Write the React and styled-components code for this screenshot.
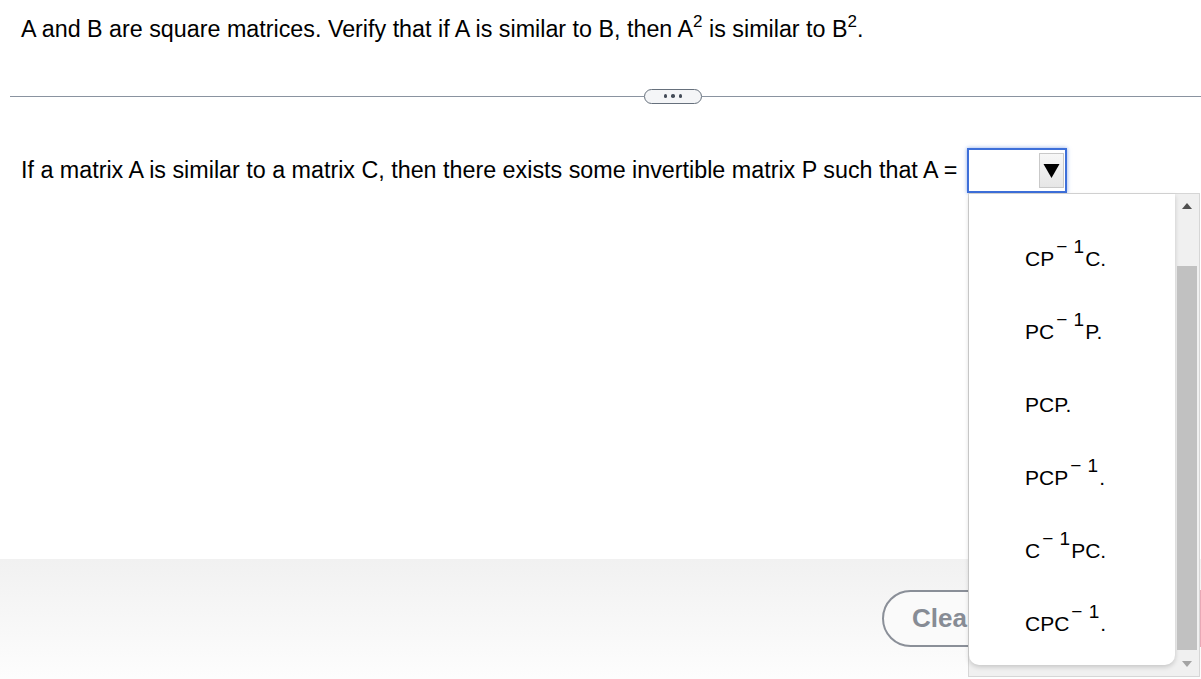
import React from "react";
import styled, { createGlobalStyle } from "styled-components";

const Global = createGlobalStyle`
  *, *::before, *::after {
    box-sizing: border-box;
  }
  html, body {
    margin: 0;
    padding: 0;
    background: #fff;
    overflow: hidden;
  }
  body {
    font-family: "Liberation Sans", Arial, sans-serif;
    color: #000;
  }
`;

const Page = styled.div`
  position: relative;
  width: 1201px;
  height: 679px;
  display: flex;
  flex-direction: column;
  overflow: hidden;
`;

const Prompt = styled.div`
  font-size: 23.3px;
  line-height: 27px;
  padding: 16px 0 0 21px;
  height: 88px;
  white-space: nowrap;
`;

const Sup = styled.sup`
  font-size: 17px;
  line-height: 0;
  position: relative;
  top: -1px;
`;

const Divider = styled.div`
  margin: 0 0 0 10px;
  height: 16px;
  display: flex;
  align-items: center;
  &::before,
  &::after {
    content: "";
    flex: 1;
    height: 1px;
    background: #8a93a0;
  }
  &::before {
    flex: 0 0 634px;
  }
`;

const MoreButton = styled.div`
  width: 58px;
  height: 15px;
  border: 1.5px solid #66707c;
  border-radius: 8px;
  background: #f4f5f7;
  display: flex;
  align-items: center;
  justify-content: center;
  gap: 4px;
  span {
    width: 3.5px;
    height: 3.5px;
    border-radius: 50%;
    background: #444c58;
  }
`;

const Question = styled.div`
  margin-top: 44px;
  padding-left: 21px;
  display: flex;
  align-items: center;
  font-size: 23.3px;
  height: 45px;
  gap: 10px;
  white-space: nowrap;
`;

const SelectBox = styled.div`
  position: relative;
  width: 100px;
  height: 45px;
  border: 2px solid #3d6fd9;
  box-shadow: 0 0 4px rgba(61, 111, 217, 0.6);
  background: #fff;
  display: flex;
  justify-content: flex-end;
  align-items: center;
  padding-right: 1px;
`;

const ArrowButton = styled.div`
  width: 25px;
  height: 35px;
  border: 1px solid #c9c9c9;
  background: linear-gradient(#f7f7f7, #e6e6e6);
  display: flex;
  align-items: center;
  justify-content: center;
`;

const Spacer = styled.div`
  flex: 1;
`;

const Footer = styled.div`
  height: 120px;
  flex-shrink: 0;
  background: linear-gradient(#f1f1f1, #fdfdfd);
  display: flex;
  align-items: flex-start;
  padding: 31px 0 0 882px;
  gap: 24px;
`;

const ClearButton = styled.div`
  height: 57px;
  border: 2.5px solid #8a8f98;
  border-radius: 29px;
  padding: 0 28px;
  display: flex;
  align-items: center;
  font-size: 26px;
  font-weight: bold;
  color: #878c95;
  background: #fafafa;
  white-space: nowrap;
  flex-shrink: 0;
`;

const CheckButton = styled.div`
  height: 57px;
  width: 220px;
  border-radius: 29px;
  background: #e9a8b6;
  flex-shrink: 0;
`;

const ListBox = styled.div`
  position: absolute;
  left: 968px;
  top: 193px;
  width: 232px;
  height: 484px;
  border: 1px solid #d6d6d6;
  background: #f0f0f0;
  display: flex;
`;

const OptionPanel = styled.div`
  flex: 1;
  background: #fff;
  border-radius: 0 0 10px 10px;
  box-shadow: 0 2px 5px rgba(0, 0, 0, 0.18);
  margin-bottom: 11px;
  display: flex;
  flex-direction: column;
  padding-top: 28px;
`;

const Option = styled.div`
  height: 73px;
  padding-left: 56px;
  font-size: 21px;
  display: flex;
  align-items: center;
  white-space: pre;
`;

const OptSup = styled.span`
  font-size: 19px;
  position: relative;
  top: -12px;
  margin-left: 2px;
  margin-right: 1px;
  word-spacing: 1px;
`;

const ScrollBar = styled.div`
  width: 24px;
  display: flex;
  flex-direction: column;
  align-items: center;
`;

const ScrollArrow = styled.div`
  height: 24px;
  width: 100%;
  display: flex;
  align-items: center;
  justify-content: center;
`;

const Thumb = styled.div`
  width: 20px;
  margin-top: ${p => p.offset}px;
  height: ${p => p.size}px;
  background: #c1c1c1;
`;

const options = [
  ["CP", "C."],
  ["PC", "P."],
  ["PCP.", null],
  ["PCP", "."],
  ["C", "PC."],
  ["CPC", "."],
];

const Inv = () => <OptSup>{"− 1"}</OptSup>;

export default function App() {
  return (
    <Page>
      <Global />
      <Prompt>
        A and B are square matrices. Verify that if A is similar to B, then A<Sup>2</Sup> is similar to B
        <Sup>2</Sup>.
      </Prompt>
      <Divider>
        <MoreButton>
          <span />
          <span />
          <span />
        </MoreButton>
      </Divider>
      <Question>
        If a matrix A is similar to a matrix C, then there exists some invertible matrix P such that A =
        <SelectBox>
          <ArrowButton>
            <svg width="17" height="16" viewBox="0 0 17 16">
              <path d="M0.5 1 H16.5 L8.5 15 Z" fill="#000" />
            </svg>
          </ArrowButton>
        </SelectBox>
      </Question>
      <Spacer />
      <Footer>
        <ClearButton>Clear all</ClearButton>
        <CheckButton />
      </Footer>
      <ListBox>
        <OptionPanel>
          {options.map(([a, b], i) => (
            <Option key={i}>
              {a}
              {b !== null && <Inv />}
              {b}
            </Option>
          ))}
        </OptionPanel>
        <ScrollBar>
          <ScrollArrow>
            <svg width="10" height="6" viewBox="0 0 10 6">
              <path d="M0 6 L5 0 L10 6 Z" fill="#505050" />
            </svg>
          </ScrollArrow>
          <Thumb offset={48} size={384} />
          <Spacer />
          <ScrollArrow>
            <svg width="10" height="6" viewBox="0 0 10 6">
              <path d="M0 0 L10 0 L5 6 Z" fill="#a3a3a3" />
            </svg>
          </ScrollArrow>
        </ScrollBar>
      </ListBox>
    </Page>
  );
}
